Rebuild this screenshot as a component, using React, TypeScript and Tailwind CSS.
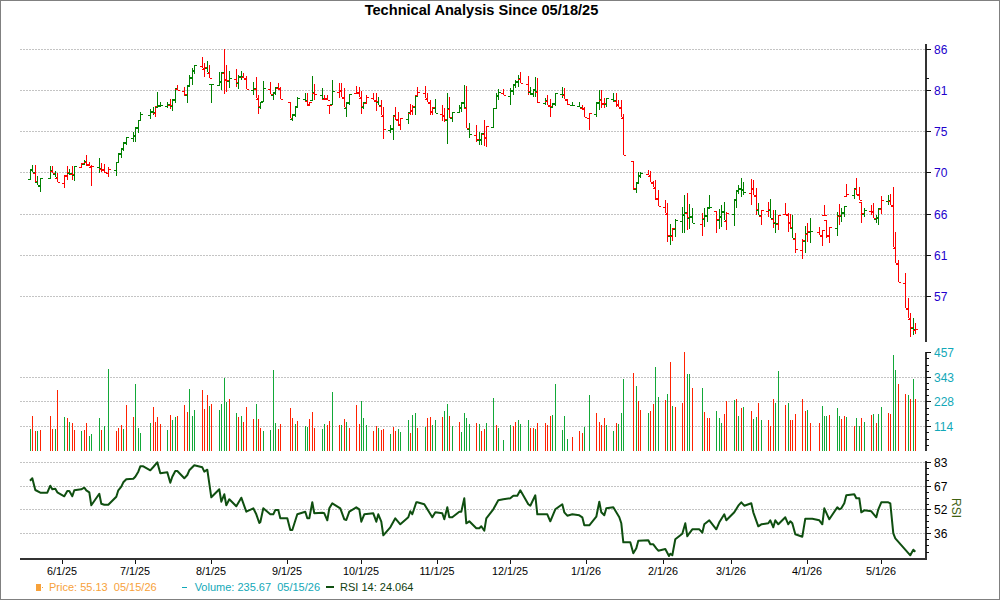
// bars read off the chart: [x, volume top (negative = red), high (negative = red), low]
type Row = [number, number, number, number];

const panelA: Row[] = [
  [91,268,508,538],[97,-229,495,515],[106,-274,-495,545],[112,274,527,555],[121,-271,535,575],
  [151,-229,498,533],[157,-268,-498,520],[166,268,512,530],[172,-151,-520,545],
  [193,232,-525,563],[202,-235,-498,540],[208,247,508,525],[217,-250,-498,540],[223,-271,497,542],
  [244,274,-488,503],[253,-271,480,495],[259,-250,-465,497],[268,289,-485,497],[274,283,-495,557],
  [298,235,475,518],[304,-271,-490,515],[313,259,-492,518],[325,88,-500,530],
  [349,-274,487,527],[355,-265,458,487],[364,-256,445,475],[370,268,425,452],[379,-196,410,436],
  [400,-232,395,427],[406,133,382,425],[415,265,360,400],[421,280,335,360],
  [451,250,328,358],[460,-202,322,345],[466,-247,-318,352],[472,-232,275,322],[481,-253,305,320],
  [502,271,305,325],[511,-226,-297,327],[517,241,298,332],[526,232,265,310],[532,-229,-255,270],
  [553,-196,-262,287],[562,-217,255,308],[568,148,225,260],[577,229,205,255],[583,211,195,222],
  [607,-151,-172,205],[613,-208,-190,230],[622,-166,183,215],[628,199,-195,235],[634,-193,252,308],
  [658,211,215,258],[664,193,215,270],[673,115,-148,282],[679,187,-195,275],[688,-178,212,265],
  [709,220,-208,260],[715,-232,225,267],[724,229,212,240],[730,-247,-220,235],[739,-202,-228,267],
  [760,-238,247,285],[769,193,-230,295],[775,-238,-285,342],[781,-265,305,327],[790,274,243,303],
  [811,271,-245,283],[820,91,275,300],[826,250,260,285],[835,-268,-250,265],[841,-253,-262,298],
  [871,-205,-307,355],[877,-235,343,362],[886,253,318,352],[892,-244,290,320],
  [916,259,280,305],[922,262,-278,318],[928,-238,-305,315],[937,-217,228,300],[943,-265,-252,300],
  [967,268,265,298],[973,253,-285,300],[982,-256,-285,300],[988,-244,-315,342],[997,157,240,312],
];

const panelB: Row[] = [
  [18,-256,-250,295],[25,256,-250,290],[34,-238,-265,320],[40,247,305,352],[49,-265,282,315],
  [70,-196,-258,280],[79,-253,-262,290],[85,184,-272,342],[91,235,305,328],[100,256,-285,308],
  [121,-274,-280,300],[130,-259,-278,332],[136,265,290,315],[145,-271,-300,345],[151,-268,-322,418],
  [172,283,375,400],[181,-262,345,420],[187,-274,-320,360],[196,268,-335,375],[202,277,-355,390],
  [226,241,335,372],[232,-280,-312,345],[238,226,-315,345],[247,220,288,345],[253,-265,-262,285],
  [277,262,-258,295],[283,-235,-280,305],[292,-232,-300,345],[298,256,-322,345],[307,241,298,340],
  [328,-232,-315,362],[334,214,-325,365],[343,193,278,432],[349,-229,-290,355],[358,259,335,365],
  [379,-247,315,335],[385,277,305,335],[394,220,255,325],[400,235,-258,385],[409,253,370,415],
  [430,-250,-375,425],[439,253,395,435],[445,-274,398,435],[454,-268,-360,438],[460,250,-378,442],
  [481,175,325,380],[490,-256,280,325],[496,265,268,300],[511,301,-268,285],
  [532,256,265,315],[541,-259,252,285],[547,-247,240,265],[556,241,225,262],[562,253,-215,248],
  [586,241,-228,285],[592,-265,262,285],[601,-265,268,290],[607,268,232,290],[613,-250,-235,310],
  [637,-250,295,315],[643,-256,-285,315],[652,-229,-298,350],[658,226,310,325],[667,133,280,318],
  [688,271,260,295],[694,229,-265,298],[703,298,-298,315],[718,-292,305,315],
  [739,-274,305,320],[748,-280,-315,325],[754,262,-320,352],[769,166,-340,390],
  [790,-220,305,352],[799,-247,270,330],[805,-256,-270,325],[814,-235,-295,325],[820,256,295,320],
  [841,274,280,305],[850,-250,-278,320],[856,253,-300,320],[865,220,-300,350],[871,118,-342,465],
  [901,-100,-482,570],[910,139,545,578],[916,-184,515,550],[922,-211,515,535],
  [946,220,-510,525],[952,-214,-512,545],[961,-193,-542,562],[967,82,-540,600],[976,172,-570,618],
  [997,-181,-600,640],
];

// this panel's highs and lows were read with a 170px lower crop, see the 510 offset below
const panelC: Row[] = [
  [1,163,-98,215],[10,-67,162,225],[16,199,-175,212],[25,-202,148,200],
  [46,-190,112,190],[52,-37,75,190],[61,103,-68,180],[67,103,103,178],[76,-145,115,158],
  [106,145,-130,198],[112,-217,115,170],[121,-235,115,155],[127,-235,75,110],
  [148,214,-122,188],[157,235,118,178],[163,250,105,172],[172,-223,95,150],[178,-184,-125,180],
  [202,181,88,168],[208,-178,60,115],[214,229,45,72],[223,-205,25,80],[229,202,35,75],
  [253,-214,-28,105],[259,238,-30,75],[268,232,-55,135],[274,-190,100,135],[283,241,-120,165],
  [304,-241,-95,140],[310,-259,88,145],[319,-178,-120,175],[325,190,120,190],[334,94,-135,180],
  [355,-196,-100,132],[364,190,-130,185],[370,-241,-132,178],[376,-241,135,205],[385,-223,-190,250],
  [406,-178,-208,268],[415,-214,168,248],[421,211,-158,215],[430,-250,145,218],
  [457,-250,-170,195],[466,199,-180,228],[472,229,-105,135],[478,229,-150,205],[487,-226,-170,218],
  [511,205,125,198],[517,229,-103,165],[523,-238,115,155],[532,-229,108,140],[538,232,-43,78],
  [562,-259,55,88],[568,235,-25,75],[577,259,-50,90],[583,-235,-95,160],[592,247,113,140],
  [613,-226,-105,135],[619,223,-100,145],[628,-250,135,160],[634,223,115,165],[643,202,-78,132],
  [664,-220,75,105],[670,-223,-72,105],[679,46,-52,230],[685,91,-185,280],[694,-133,-270,335],
  [715,-163,-310,415],[724,166,-385,445],[730,-178,-428,500],[739,118,445,495],[745,-178,-458,492],
];

const rsiA = [[90,77],[97,70],[106,105],[121,113],[142,113],[151,92],[157,103],[166,101],[172,112],[193,124],[202,108],[208,108],[217,124],[223,106],[244,103],[253,98],[259,106],[268,112],[274,151],[298,116],[304,146],[313,149],[325,149],[349,125],[355,106],[364,95],[370,82],[379,73],[400,71],[406,65],[415,50],[421,34],[430,34],[451,46],[460,36],[472,22],[481,55],[502,52],[511,83],[517,65],[526,48],[532,48],[553,70],[562,60],[568,46],[583,31],[607,37],[613,50],[622,44],[634,127],[658,103],[664,140],[673,118],[679,151],[688,133],[709,154],[724,128],[739,170],[760,160],[769,178],[778,204],[781,202],[790,160],[811,178],[820,178],[826,165],[835,165],[841,190],[862,190],[871,225],[877,225],[892,178],[916,170],[922,190],[928,190],[937,142],[943,175],[967,173],[973,175],[982,196],[988,160],[997,145]];
const rsiB = [[22,160],[34,193],[40,195],[49,170],[70,157],[79,163],[85,200],[94,178],[121,175],[130,200],[136,178],[145,200],[151,241],[172,217],[187,190],[202,208],[226,187],[232,169],[238,178],[250,142],[253,142],[274,148],[298,187],[307,172],[328,175],[334,193],[343,157],[349,187],[358,187],[379,170],[385,170],[394,130],[400,205],[409,199],[430,220],[439,220],[445,214],[454,227],[460,190],[481,163],[496,136],[511,133],[532,130],[541,122],[553,122],[562,106],[586,148],[592,152],[607,121],[613,178],[637,178],[643,178],[652,199],[667,163],[688,148],[694,172],[703,182],[718,178],[739,181],[748,187],[754,211],[769,211],[790,185],[799,140],[805,172],[814,181],[820,160],[841,157],[850,172],[859,187],[865,205],[871,262],[892,262],[901,295],[910,280],[916,257],[946,256],[952,268],[961,268],[970,280],[976,287],[997,282]];
const rsiC = [[6,303],[10,296],[16,301],[25,253],[46,236],[55,205],[61,244],[67,235],[76,223],[97,223],[106,233],[112,208],[127,196],[148,223],[157,202],[172,178],[178,196],[202,172],[214,152],[223,142],[232,152],[253,145],[259,172],[274,214],[283,208],[304,205],[310,196],[319,217],[325,196],[334,208],[355,187],[364,208],[370,199],[376,205],[385,238],[406,245],[415,191],[436,191],[457,196],[466,208],[472,160],[487,193],[511,157],[517,163],[523,160],[532,145],[538,121],[562,118],[568,130],[577,130],[583,172],[592,166],[613,169],[628,187],[634,163],[643,142],[664,142],[670,145],[679,235],[685,250],[730,301],[739,284],[745,290]];

const bars = [
  ...panelA.map((r) => ({ r, off: 0, py: 0 })),
  ...panelB.map((r) => ({ r, off: 333, py: 0 })),
  ...panelC.map((r) => ({ r, off: 667, py: 510 })),
].map(({ r, off, py }) => ({
  x: Math.floor(off + r[0] / 3) + 0.5,
  volTop: 340 + Math.abs(r[1]) / 3,
  volUp: r[1] > 0,
  hi: Math.round((py + Math.abs(r[2])) / 3),
  lo: Math.round((py + r[3]) / 3),
  up: r[2] > 0,
}));

const clamp = (v: number, a: number, b: number) => Math.max(a, Math.min(b, v));

// open and close ticks follow the neighbouring bars
let lastClose = bars[0].lo;
const ohlc = bars.map((b, i) => {
  const next = bars[i + 1] ?? b;
  const open = Math.round(clamp(lastClose, b.hi, b.lo)) + 0.5;
  const close = Math.round(clamp((next.hi + next.lo) / 2, b.hi, b.lo)) + 0.5;
  lastClose = close;
  return { ...b, open, close };
});

const rsiPoints = [
  ...rsiA.map(([x, y]) => [x / 3, y]),
  ...rsiB.map(([x, y]) => [333 + x / 3, y]),
  ...rsiC.map(([x, y]) => [667 + x / 3, y]),
]
  .map(([x, y]) => `${x.toFixed(1)},${(455 + y / 3).toFixed(1)}`)
  .join(' ');

const priceAxis = [[49.5, '86'], [90.5, '81'], [131.5, '75'], [172.5, '70'], [214.5, '66'], [255.5, '61'], [296.5, '57']] as const;
const volumeAxis = [[377.5, '343'], [401.5, '228'], [426.5, '114']] as const;
const rsiAxis = [[462.5, '83'], [486.5, '67'], [509.5, '52'], [533.5, '36']] as const;
const months = [[62.5, '6/1/25'], [135.5, '7/1/25'], [211.5, '8/1/25'], [287.5, '9/1/25'], [361.5, '10/1/25'], [437.5, '11/1/25'], [510.5, '12/1/25'], [586.5, '1/1/26'], [663.5, '2/1/26'], [731.5, '3/1/26'], [807.5, '4/1/26'], [881.5, '5/1/26']] as const;

const volumeMinor = [358, 365, 371, 383, 389, 395, 408, 414, 420, 432, 439, 445];
const rsiMinor = [468, 474, 480, 492, 498, 504, 515, 521, 527, 539, 545, 552];

function Grid({ y }: { y: number }) {
  return <line x1={20} x2={925} y1={y} y2={y} stroke="#c4c4c4" strokeDasharray="2 1" />;
}

function Tick({ y, len = 5 }: { y: number; len?: number }) {
  return <line x1={926} x2={926 + len} y1={y} y2={y} stroke="#111" />;
}

function Chart() {
  return (
    <svg width={998} height={558} viewBox="1 20 998 558" className="block shrink-0">
      <g shapeRendering="crispEdges">
        {priceAxis.map(([y]) => <Grid key={y} y={y} />)}
        {volumeAxis.map(([y]) => <Grid key={y} y={y} />)}
        {rsiAxis.map(([y]) => <Grid key={y} y={y} />)}

        {bars.map((b) => (
          <line key={b.x} x1={b.x} x2={b.x} y1={b.volTop} y2={451} stroke={b.volUp ? '#12a838' : '#ff2200'} />
        ))}

        {ohlc.map((b) => {
          const color = b.up ? '#008000' : '#ff0000';
          return (
            <g key={b.x} stroke={color}>
              <line x1={b.x} x2={b.x} y1={b.hi} y2={b.lo} />
              <line x1={b.x - 2.5} x2={b.x} y1={b.open} y2={b.open} />
              <line x1={b.x} x2={b.x + 2.5} y1={b.close} y2={b.close} />
            </g>
          );
        })}

        {/* axes */}
        <rect x={925} y={44} width={2} height={298} fill="#333" />
        <rect x={925} y={352} width={2} height={99} fill="#333" />
        <rect x={925} y={461} width={2} height={98} fill="#333" />
        <rect x={20} y={558} width={907} height={2} fill="#333" />

        {priceAxis.map(([y]) => <Tick key={y} y={y} />)}
        <Tick y={78.5} len={3} />
        <Tick y={352.5} />
        {volumeAxis.map(([y]) => <Tick key={y} y={y} />)}
        {volumeMinor.map((y) => <Tick key={y} y={y + 0.5} len={3} />)}
        {rsiAxis.map(([y]) => <Tick key={y} y={y} />)}
        {rsiMinor.map((y) => <Tick key={y} y={y + 0.5} len={3} />)}
        {months.map(([x]) => <line key={x} x1={x} x2={x} y1={560} y2={564} stroke="#111" />)}
      </g>

      <polyline points={rsiPoints} fill="none" stroke="#0f4f10" strokeWidth={2} strokeLinejoin="round" />

      <g fontSize={12}>
        {priceAxis.map(([y, t]) => (
          <text key={t} x={934} y={y + 4} fill="#2200cc">{t}</text>
        ))}
        <text x={934} y={356.5} fill="#12a8b8">457</text>
        {volumeAxis.map(([y, t]) => (
          <text key={t} x={934} y={y + 4} fill="#12a8b8">{t}</text>
        ))}
        {rsiAxis.map(([y, t]) => (
          <text key={t} x={934} y={y + 4} fill="#000">{t}</text>
        ))}
        <text x={952} y={498} fill="#3f6212" transform="rotate(90 952 498)">RSI</text>
      </g>

      <g fontSize={10.8} fill="#000" textAnchor="middle">
        {months.map(([x, t]) => (
          <text key={t} x={x - 0.5} y={575}>{t}</text>
        ))}
      </g>
    </svg>
  );
}

export default function App() {
  return (
    <div className="w-[1000px] h-[600px] flex flex-col border border-[#808080] bg-white font-['Liberation_Sans',Arial,sans-serif] overflow-hidden">
      <h1 className="h-[19px] pr-[37px] text-center text-[14.6px] leading-[18px] font-bold text-black">
        Technical Analysis Since 05/18/25
      </h1>
      <Chart />
      <div className="h-[20px] pb-[2px] flex items-center pl-[35px] text-[11px] whitespace-pre">
        <span className="w-[5px] h-[7px] bg-[#f7a13a]" />
        <span className="ml-[1px] w-px h-px bg-[#f7a13a]" />
        <span className="ml-[6px] text-[#f7a13a]">Price: 55.13  05/15/26</span>
        <span className="ml-[25px] w-[5px] h-px bg-[#12a8b8]" />
        <span className="ml-[8px] text-[#12a8b8]">Volume: 235.67  05/15/26</span>
        <span className="ml-[6px] w-[8px] h-[2px] bg-[#0f4f10]" />
        <span className="ml-[6px] text-[#0f4010]">RSI 14: 24.064</span>
      </div>
    </div>
  );
}
